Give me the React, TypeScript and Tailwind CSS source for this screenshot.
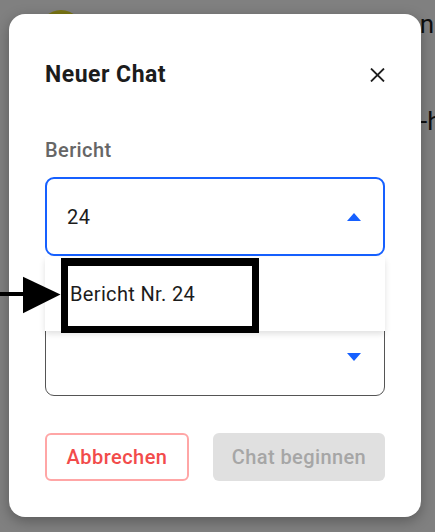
import React from "react";

function CaretIcon({ up }: { up?: boolean }) {
  return (
    <svg width="14" height="8" viewBox="0 0 14 8" className="shrink-0">
      {up ? <path d="M0 8 L7 0 L14 8 Z" fill="#1660ff" /> : <path d="M0 0 L7 8 L14 0 Z" fill="#1660ff" />}
    </svg>
  );
}

export default function App() {
  return (
    <div className="relative w-[435px] h-[532px] overflow-hidden bg-[#808080] font-['Roboto','Liberation_Sans',sans-serif]">
      {/* dimmed page behind the dialog */}
      <div className="absolute left-[39px] top-[10px] w-[44px] h-[44px] rounded-full bg-[#7a7614]" />
      <span className="absolute left-[405px] top-[9px] whitespace-nowrap text-[26px] leading-[30px] text-[#0e0e0e]">on</span>
      <span className="absolute left-[420px] top-[106px] whitespace-nowrap text-[26px] leading-[30px] text-[#0e0e0e]">-h</span>

      <div className="absolute left-[9px] top-[14px] w-[412px] h-[503px] rounded-[16px] bg-white shadow-[0_4px_14px_rgba(0,0,0,0.3)] px-[36px] pt-[47px] flex flex-col">
        <div className="flex items-center justify-between h-[28px]">
          <h1 className="text-[23px] leading-[28px] tracking-[0.5px] font-bold text-[#1c1c1c]">Neuer Chat</h1>
          <button className="w-[28px] h-[28px] flex items-center justify-center mr-[-6px]">
            <svg width="15" height="14" viewBox="0 0 15 14">
              <path d="M1 0.5 L14 13.5 M14 0.5 L1 13.5" stroke="#1f1f1f" strokeWidth="1.8" />
            </svg>
          </button>
        </div>

        <label className="mt-[49px] text-[20px] leading-[24px] tracking-[0.4px] font-medium text-[#666666]">Bericht</label>
        <div className="mt-[15px] h-[79px] rounded-[9px] border-2 border-[#1660ff] flex items-center justify-between pl-[20px] pr-[22px]">
          <span className="text-[20px] tracking-[0.4px] text-[#1c1c1c]">24</span>
          <CaretIcon up />
        </div>

        <div className="mt-[61px] h-[79px] rounded-[9px] border border-[#555555] flex items-center justify-end pr-[23px]">
          <CaretIcon />
        </div>

        <div className="mt-[37px] flex gap-[24px]">
          <button className="w-[144px] h-[48px] rounded-[6px] border-2 border-[#ffa6a6] text-[20px] tracking-[0.45px] font-medium text-[#f24b4b]">Abbrechen</button>
          <button className="w-[172px] h-[48px] rounded-[6px] bg-[#e0e0e0] text-[20px] tracking-[0.4px] font-medium text-[#a6a6a6]">Chat beginnen</button>
        </div>
      </div>

      {/* open dropdown list */}
      <div className="absolute left-[45px] top-[257px] w-[340px] h-[74px] bg-white shadow-[0_3px_6px_rgba(0,0,0,0.12)] flex items-center pl-[25px]">
        <span className="text-[20px] tracking-[0.35px] text-[#1c1c1c]">Bericht Nr. 24</span>
      </div>

      {/* annotation */}
      <div className="absolute left-[61px] top-[258px] w-[198px] h-[75px] border-[7px] border-t-[8px] border-black" />
      <svg className="absolute left-0 top-[276px]" width="62" height="38" viewBox="0 0 62 38">
        <rect x="0" y="16" width="25" height="4" fill="#000" />
        <path d="M23 0.7 L60.5 18.5 L23 37.3 Z" fill="#000" />
      </svg>
    </div>
  );
}
